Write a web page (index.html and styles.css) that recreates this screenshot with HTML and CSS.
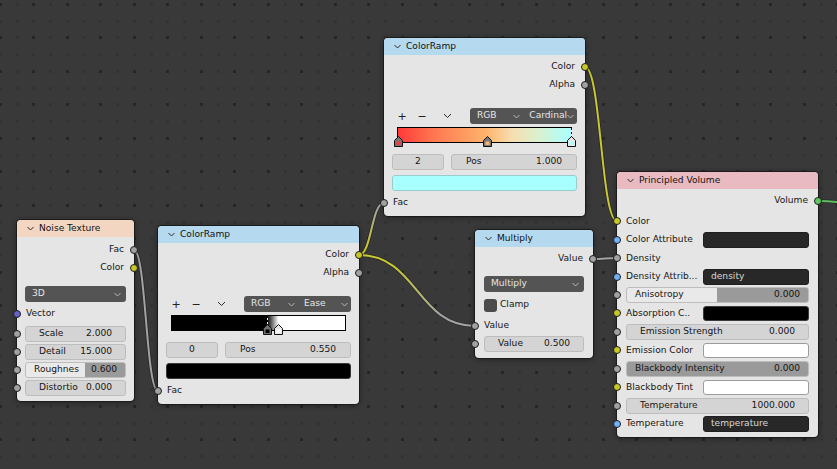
FILE: index.html
```html
<!DOCTYPE html>
<html lang="en">
<head>
<meta charset="utf-8">
<title>Shader Nodes</title>
<link rel="stylesheet" href="styles.css">
</head>
<body>
<div class="canvas">
  <svg class="layer" width="837" height="469" aria-hidden="true">
    <defs>
      <pattern id="dots" x="-1" y="3" width="67" height="67" patternUnits="userSpaceOnUse">
        <rect x="0" y="0" width="3" height="3" fill="#262626"/>
        <rect x="33" y="0" width="3" height="3" fill="#262626"/>
        <rect x="0" y="33" width="3" height="3" fill="#262626"/>
        <rect x="33" y="33" width="3" height="3" fill="#262626"/>
        <g fill="#333333">
          <rect x="17" y="0" width="3" height="3"/><rect x="50" y="0" width="3" height="3"/>
          <rect x="17" y="33" width="3" height="3"/><rect x="50" y="33" width="3" height="3"/>
          <rect x="0" y="17" width="3" height="3"/><rect x="17" y="17" width="3" height="3"/>
          <rect x="33" y="17" width="3" height="3"/><rect x="50" y="17" width="3" height="3"/>
          <rect x="0" y="50" width="3" height="3"/><rect x="17" y="50" width="3" height="3"/>
          <rect x="33" y="50" width="3" height="3"/><rect x="50" y="50" width="3" height="3"/>
        </g>
      </pattern>
    </defs>
    <rect width="837" height="469" fill="url(#dots)"/>
  </svg>

  <svg class="layer" width="837" height="469" aria-hidden="true">
    <defs>
      <linearGradient id="g2" gradientUnits="userSpaceOnUse" x1="359" y1="255" x2="384" y2="203">
        <stop offset="0.2" stop-color="#c8c832"/><stop offset="0.9" stop-color="#a3a3a3"/>
      </linearGradient>
      <linearGradient id="g3" gradientUnits="userSpaceOnUse" x1="359" y1="255" x2="475" y2="326">
        <stop offset="0.25" stop-color="#c8c832"/><stop offset="0.75" stop-color="#a3a3a3"/>
      </linearGradient>
    </defs>
    <g class="wire-shadow">
      <path d="M134 250 C146 250 146 391 158 391"/>
      <path d="M359 255 C371.5 255 371.5 203 384 203"/>
      <path d="M359 255 C417 255 417 326 475 326"/>
      <path d="M585 67 C601 67 601 221 617 221"/>
      <path d="M593 259 C605 259 605 258 617 258"/>
      <path d="M818 201 C840 201 850 204 870 206"/>
    </g>
    <g class="wire">
      <path d="M134 250 C146 250 146 391 158 391" stroke="#a3a3a3"/>
      <path d="M359 255 C371.5 255 371.5 203 384 203" stroke="url(#g2)"/>
      <path d="M359 255 C417 255 417 326 475 326" stroke="url(#g3)"/>
      <path d="M585 67 C601 67 601 221 617 221" stroke="#c8c832"/>
      <path d="M593 259 C605 259 605 258 617 258" stroke="#a3a3a3"/>
      <path d="M818 201 C840 201 850 204 870 206" stroke="#5fc25f"/>
    </g>
  </svg>

  <!-- Noise Texture -->
  <div class="node noise">
    <div class="hdr tex"><svg class="chev" width="7" height="5" viewBox="0 0 7 5"><polyline points="0.5,1 3.5,4 6.5,1"/></svg><span>Noise Texture</span></div>
    <div class="body pt4">
      <div class="row out"><span>Fac</span><span class="sock gray"></span></div>
      <div class="row out"><span>Color</span><span class="sock yellow"></span></div>
      <div class="dd noise-dd"><span>3D</span><svg class="chev light" width="7" height="5" viewBox="0 0 7 5"><polyline points="0.5,1 3.5,4 6.5,1"/></svg></div>
      <div class="row in mt3"><span class="sock violet"></span><span>Vector</span></div>
      <div class="frow mt2"><span class="sock gray"></span><div class="num"><span>Scale</span><span>2.000</span></div></div>
      <div class="frow"><span class="sock gray"></span><div class="num"><span>Detail</span><span>15.000</span></div></div>
      <div class="frow"><span class="sock gray"></span><div class="num slider" style="--f:60%"><span>Roughnes</span><span>0.600</span></div></div>
      <div class="frow"><span class="sock gray"></span><div class="num"><span>Distortio</span><span>0.000</span></div></div>
    </div>
  </div>

  <!-- ColorRamp (lower) -->
  <div class="node ramp ramp-a">
    <div class="hdr conv"><svg class="chev" width="7" height="5" viewBox="0 0 7 5"><polyline points="0.5,1 3.5,4 6.5,1"/></svg><span>ColorRamp</span></div>
    <div class="body pt3">
      <div class="row out"><span>Color</span><span class="sock yellow"></span></div>
      <div class="row out"><span>Alpha</span><span class="sock gray"></span></div>
      <div class="tools">
        <span class="tool">+</span><span class="tool">−</span>
        <span class="tool tool-menu"><svg class="chev" width="9" height="6" viewBox="0 0 9 6"><polyline points="1,1 4.5,4.5 8,1"/></svg></span>
        <div class="dd split">
          <span class="half"><span>RGB</span><svg class="chev light" width="7" height="5" viewBox="0 0 7 5"><polyline points="0.5,1 3.5,4 6.5,1"/></svg></span>
          <span class="half"><span>Ease</span><svg class="chev light" width="7" height="5" viewBox="0 0 7 5"><polyline points="0.5,1 3.5,4 6.5,1"/></svg></span>
        </div>
      </div>
      <div class="bar bw">
        <span class="cursor" style="left:55%"></span>
        <svg class="stop" style="left:55%" width="9" height="11" viewBox="0 0 9 11"><path d="M0.5 10.5V4.5L4.5 0.5L8.5 4.5V10.5Z" fill="#6f6f6f" stroke="#111"/><rect x="2.5" y="5.5" width="4" height="3.5" fill="#000"/></svg>
        <svg class="stop" style="left:61.5%" width="9" height="11" viewBox="0 0 9 11"><path d="M0.5 10.5V4.5L4.5 0.5L8.5 4.5V10.5Z" fill="#e8e8e8" stroke="#111"/><rect x="2.5" y="5.5" width="4" height="3.5" fill="#fff"/></svg>
      </div>
      <div class="pair">
        <div class="num idx">0</div>
        <div class="num pos"><span>Pos</span><span>0.550</span></div>
      </div>
      <div class="swatch wide black"></div>
      <div class="row in mt3"><span class="sock gray"></span><span>Fac</span></div>
    </div>
  </div>

  <!-- ColorRamp (upper) -->
  <div class="node ramp ramp-b">
    <div class="hdr conv"><svg class="chev" width="7" height="5" viewBox="0 0 7 5"><polyline points="0.5,1 3.5,4 6.5,1"/></svg><span>ColorRamp</span></div>
    <div class="body pt3">
      <div class="row out"><span>Color</span><span class="sock yellow"></span></div>
      <div class="row out"><span>Alpha</span><span class="sock gray"></span></div>
      <div class="tools">
        <span class="tool">+</span><span class="tool">−</span>
        <span class="tool tool-menu"><svg class="chev" width="9" height="6" viewBox="0 0 9 6"><polyline points="1,1 4.5,4.5 8,1"/></svg></span>
        <div class="dd split">
          <span class="half"><span>RGB</span><svg class="chev light" width="7" height="5" viewBox="0 0 7 5"><polyline points="0.5,1 3.5,4 6.5,1"/></svg></span>
          <span class="half"><span>Cardinal</span><svg class="chev light" width="7" height="5" viewBox="0 0 7 5"><polyline points="0.5,1 3.5,4 6.5,1"/></svg></span>
        </div>
      </div>
      <div class="bar warm">
        <span class="cursor" style="left:100%"></span>
        <svg class="stop" style="left:0%" width="9" height="11" viewBox="0 0 9 11"><path d="M0.5 10.5V4.5L4.5 0.5L8.5 4.5V10.5Z" fill="#777" stroke="#111"/><rect x="2.5" y="5.5" width="4" height="3.5" fill="#ff3838"/></svg>
        <svg class="stop" style="left:51.5%" width="9" height="11" viewBox="0 0 9 11"><path d="M0.5 10.5V4.5L4.5 0.5L8.5 4.5V10.5Z" fill="#777" stroke="#111"/><rect x="2.5" y="5.5" width="4" height="3.5" fill="#ffb46c"/></svg>
        <svg class="stop" style="left:100%" width="9" height="11" viewBox="0 0 9 11"><path d="M0.5 10.5V4.5L4.5 0.5L8.5 4.5V10.5Z" fill="#e8e8e8" stroke="#111"/><rect x="2.5" y="5.5" width="4" height="3.5" fill="#a8ffff"/></svg>
      </div>
      <div class="pair">
        <div class="num idx">2</div>
        <div class="num pos"><span>Pos</span><span>1.000</span></div>
      </div>
      <div class="swatch wide cyan"></div>
      <div class="row in mt3"><span class="sock gray"></span><span>Fac</span></div>
    </div>
  </div>

  <!-- Multiply -->
  <div class="node mult">
    <div class="hdr conv"><svg class="chev" width="7" height="5" viewBox="0 0 7 5"><polyline points="0.5,1 3.5,4 6.5,1"/></svg><span>Multiply</span></div>
    <div class="body pt3">
      <div class="row out"><span>Value</span><span class="sock gray"></span></div>
      <div class="dd mult-dd"><span>Multiply</span><svg class="chev light" width="7" height="5" viewBox="0 0 7 5"><polyline points="0.5,1 3.5,4 6.5,1"/></svg></div>
      <div class="check"><span class="box"></span><span>Clamp</span></div>
      <div class="row in mt3"><span class="sock gray"></span><span>Value</span></div>
      <div class="frow mfield"><span class="sock gray"></span><div class="num"><span>Value</span><span>0.500</span></div></div>
    </div>
  </div>

  <!-- Principled Volume -->
  <div class="node pv">
    <div class="hdr shader"><svg class="chev" width="7" height="5" viewBox="0 0 7 5"><polyline points="0.5,1 3.5,4 6.5,1"/></svg><span>Principled Volume</span></div>
    <div class="body pt3">
      <div class="row out"><span>Volume</span><span class="sock green"></span></div>
      <div class="inputs">
        <div class="prow"><span class="sock yellow"></span><span class="lbl">Color</span></div>
        <div class="prow"><span class="sock blue"></span><span class="lbl">Color Attribute</span><span class="attr"></span></div>
        <div class="prow"><span class="sock gray"></span><span class="lbl">Density</span></div>
        <div class="prow"><span class="sock blue"></span><span class="lbl">Density Attrib...</span><span class="attr">density</span></div>
        <div class="prow"><span class="sock gray"></span><div class="num slider" style="--f:50%"><span>Anisotropy</span><span>0.000</span></div></div>
        <div class="prow"><span class="sock yellow"></span><span class="lbl">Absorption C..</span><span class="swatch black"></span></div>
        <div class="prow"><span class="sock gray"></span><div class="num"><span>Emission Strength</span><span>0.000</span></div></div>
        <div class="prow"><span class="sock yellow"></span><span class="lbl">Emission Color</span><span class="swatch white"></span></div>
        <div class="prow"><span class="sock gray"></span><div class="num slider" style="--f:0%"><span>Blackbody Intensity</span><span>0.000</span></div></div>
        <div class="prow"><span class="sock yellow"></span><span class="lbl">Blackbody Tint</span><span class="swatch white"></span></div>
        <div class="prow"><span class="sock gray"></span><div class="num"><span>Temperature</span><span>1000.000</span></div></div>
        <div class="prow"><span class="sock blue"></span><span class="lbl">Temperature</span><span class="attr">temperature</span></div>
      </div>
    </div>
  </div>
</div>
</body>
</html>
```

FILE: styles.css
```css
* { box-sizing: border-box; margin: 0; padding: 0; }
html, body { width: 837px; height: 469px; overflow: hidden; }
body {
  background: #393939;
  font-family: "DejaVu Sans", "Liberation Sans", sans-serif;
  font-size: 9.1px;
  line-height: 1;
  color: #151515;
}
.canvas { position: relative; width: 837px; height: 469px; }
.layer { position: absolute; left: 0; top: 0; display: block; }

.wire-shadow path { fill: none; stroke: #1c1c1c; stroke-width: 3.6; stroke-opacity: 0.55; }
.wire path { fill: none; stroke-width: 2; }

/* nodes */
.node {
  position: absolute;
  display: flex;
  flex-direction: column;
  background: #e5e5e5;
  border-radius: 4px;
  box-shadow: 0 0 0 1px #1b1b1b, 0 1px 6px rgba(0, 0, 0, 0.45);
}
.noise  { left: 17px;  top: 220px; width: 117px; height: 181px; }
.ramp-a { left: 158px; top: 226px; width: 201px; height: 178px; }
.ramp-b { left: 384px; top: 38px;  width: 201px; height: 178px; }
.mult   { left: 475px; top: 230px; width: 118px; height: 128px; }
.pv     { left: 617px; top: 172px; width: 201px; height: 265px; }

.hdr {
  flex: none;
  height: 17px;
  display: flex;
  align-items: center;
  gap: 5px;
  padding-left: 10px;
  border-radius: 4px 4px 0 0;
  color: #111;
}
.tex { background: #f3d6c2; }
.conv { background: #b5d9ef; }
.shader { background: #e9bac2; }

svg.chev { display: block; flex: none; }
.chev polyline { fill: none; stroke: #2a2a2a; stroke-width: 1; }
.chev.light polyline { stroke: #b8b8b8; }

.body { flex: 1; display: flex; flex-direction: column; }
.pt3 { padding-top: 3px; }
.pt4 { padding-top: 4px; }
.mt2 { margin-top: 2px; }
.mt3 { margin-top: 3px; }

.row { flex: none; position: relative; height: 18px; display: flex; align-items: center; }
.out { justify-content: flex-end; padding-right: 10px; }
.in { padding-left: 9px; }

.sock {
  position: absolute;
  top: 50%;
  width: 8px;
  height: 8px;
  margin-top: -4px;
  border-radius: 50%;
  border: 1px solid #1d1d1d;
}
.out .sock { right: -4px; }
.in .sock, .frow .sock, .prow .sock { left: -4px; }
.gray { background: #a1a1a1; }
.yellow { background: #c7c729; }
.violet { background: #6363c7; }
.blue { background: #70b1f5; }
.green { background: #5fc75f; }

/* dark dropdowns */
.dd {
  flex: none;
  height: 16px;
  border-radius: 3px;
  background: #545454;
  color: #e6e6e6;
  display: flex;
  align-items: center;
  justify-content: space-between;
  padding: 0 5px 0 7px;
}
.noise-dd { margin: 9px 8px 0; }
.mult-dd { margin: 8px 9px 0; }

/* number fields */
.frow { flex: none; position: relative; height: 18px; display: flex; align-items: center; padding: 0 8px; }
.mfield { padding: 0 9px; }
.num {
  flex: 1;
  height: 16px;
  border-radius: 3px;
  background: #d4d4d4;
  border: 1px solid #bdbdbd;
  display: flex;
  align-items: center;
  justify-content: space-between;
  padding: 0 13px;
  white-space: nowrap;
  overflow: hidden;
}
.num.slider {
  padding: 0 8px;
  background: linear-gradient(to right, #e9e9e9 var(--f), #9a9a9a var(--f));
}

/* color ramp */
.tools { flex: none; display: flex; align-items: center; height: 16px; margin-top: 14px; padding: 0 8px; }
.tool { width: 20px; text-align: center; font-size: 11px; color: #222; }
.tool-menu { display: flex; justify-content: center; margin-left: 5px; }
.split { margin-left: auto; width: 107px; padding: 0; }
.half { flex: 1; display: flex; align-items: center; justify-content: space-between; padding: 0 3px 0 7px; }
.half + .half { padding-left: 6px; }

.bar {
  flex: none;
  position: relative;
  height: 16px;
  margin: 3px 13px 0;
  border: 1px solid #000;
}
.bw { background: linear-gradient(to right, #000 55%, #fff 61.5%); }
.warm {
  background: linear-gradient(to right, #ff3a3a 0%, #ff7a52 22%, #ffb46c 51%, #f6deb0 66%, #d8f2d0 82%, #a8ffff 100%);
}
.stop { position: absolute; top: 8px; margin-left: -4.5px; display: block; }
.cursor {
  position: absolute;
  top: 0;
  width: 1px;
  height: 8px;
  margin-left: -0.5px;
  background: repeating-linear-gradient(to bottom, #000 0 2px, #fff 2px 4px);
}

.pair { flex: none; display: flex; gap: 7px; margin: 11px 8px 0; }
.idx { flex: none; width: 52px; justify-content: center; padding: 0; }
.pos { padding: 0 14px; }

.swatch { display: block; height: 16px; border-radius: 3px; border: 1px solid #9c9c9c; }
.swatch.wide { flex: none; margin: 5px 8px 0; }
.black { background: #000; border-color: #3a3a3a; }
.white { background: #fff; }
.cyan { background: #a8ffff; border-color: #9cc; }

/* multiply */
.check { flex: none; height: 18px; margin: 4px 9px 0; display: flex; align-items: center; gap: 3px; }
.box { width: 13px; height: 13px; border-radius: 3px; background: #4b4b4b; }

/* principled volume */
.inputs { margin-top: 2px; display: flex; flex-direction: column; }
.prow {
  flex: none;
  position: relative;
  height: 18.45px;
  display: flex;
  align-items: center;
  padding: 0 9px;
}
.lbl { flex: 1; white-space: nowrap; overflow: hidden; }
.prow .swatch, .attr { flex: none; width: 106px; }
.prow .swatch { height: 15px; }
.attr {
  height: 16px;
  border-radius: 3px;
  background: #282828;
  border: 1px solid #1f1f1f;
  color: #d8d8d8;
  display: flex;
  align-items: center;
  padding-left: 7px;
}
```
